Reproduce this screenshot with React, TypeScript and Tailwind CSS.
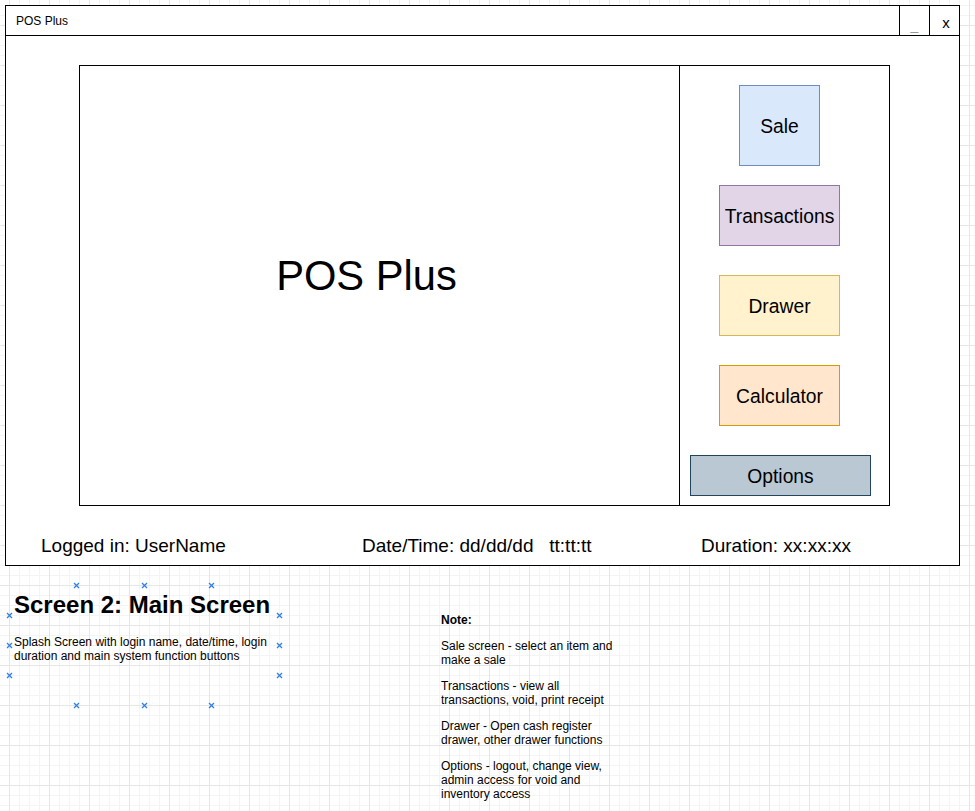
import React from "react";

const ACTIONS = [
    { label: "Sale", box: "w-[81px] h-[81px] bg-[#dae8fc] border-[#6c8ebf]", gap: "" },
    { label: "Transactions", box: "w-[121px] h-[61px] bg-[#e1d5e7] border-[#9673a6]", gap: "mt-[19px]" },
    { label: "Drawer", box: "w-[121px] h-[61px] bg-[#fff2cc] border-[#d6b656]", gap: "mt-[29px]" },
    { label: "Calculator", box: "w-[121px] h-[61px] bg-[#ffe6cc] border-[#d79b00]", gap: "mt-[29px]" },
    { label: "Options", box: "w-[181px] h-[41px] bg-[#bac8d3] border-[#23445d]", gap: "mt-[29px] ml-[2px]" },
];

const NOTES = [
    ["Sale screen - select an item and", "make a sale"],
    ["Transactions - view all", "transactions, void, print receipt"],
    ["Drawer - Open cash register", "drawer, other drawer functions"],
    ["Options - logout, change view,", "admin access for void and", "inventory access"],
];

// connection handles round the selected text box (x, y inside the 270x120 box)
const HANDLES = [
    [67.5, 0], [135, 0], [202.5, 0],
    [0, 30], [0, 60], [0, 90],
    [270, 30], [270, 60], [270, 90],
    [67.5, 120], [135, 120], [202.5, 120],
];

function Handle({ x, y }: { x: number; y: number }) {
    return (
        <svg
            width="7"
            height="7"
            viewBox="0 0 7 7"
            className="absolute"
            style={{ left: x - 3.5, top: y - 3.5 }}
        >
            <path d="M1 1L6 6M6 1L1 6" stroke="#2f80ed" strokeWidth="1.3" />
        </svg>
    );
}

function MainWindow() {
    return (
        <div className="w-[955px] h-[561px] border border-black bg-white flex flex-col">
            {/* Title bar */}
            <div className="h-[30px] border-b border-black flex items-stretch">
                <div className="flex-1 flex items-center pl-[10px] text-[12px]">POS Plus</div>
                <div className="w-[30px] border-l border-black flex items-end justify-center pb-[3px] text-[14px] leading-none text-[#999]">
                    _
                </div>
                <div className="w-[30px] border-l border-black flex items-center justify-center pt-[4px] pl-[3px] text-[15px] leading-none">
                    x
                </div>
            </div>

            {/* Body */}
            <div className="flex-1 pt-[29px] pl-[73px]">
                <div className="w-[811px] h-[441px] border border-black flex">
                    <div className="w-[600px] border-r border-black flex items-center justify-center pr-[26px] pb-[20px]">
                        <span className="text-[41.7px] leading-none">POS Plus</span>
                    </div>
                    <div className="flex-1 flex flex-col items-center pt-[19px] pr-[10px]">
                        {ACTIONS.map((a) => (
                            <div
                                key={a.label}
                                className={`${a.box} ${a.gap} border flex items-center justify-center pt-[2px] text-[19.3px] leading-none`}
                            >
                                {a.label}
                            </div>
                        ))}
                    </div>
                </div>

                {/* Status line */}
                <div className="mt-[30px] -ml-[38px] flex text-[19px] leading-[20px] whitespace-pre">
                    <span className="w-[321px]">Logged in: UserName</span>
                    <span className="w-[339px]">Date/Time: dd/dd/dd   tt:tt:tt</span>
                    <span>Duration: xx:xx:xx</span>
                </div>
            </div>
        </div>
    );
}

export default function App() {
    return (
        <div className="min-h-screen w-full pt-[5px] pl-[5px] text-black font-['Liberation_Sans',Arial,sans-serif] bg-white [background-image:linear-gradient(to_right,#e6e6e6_1px,transparent_1px),linear-gradient(to_bottom,#e6e6e6_1px,transparent_1px),linear-gradient(to_right,#f4f4f4_1px,transparent_1px),linear-gradient(to_bottom,#f4f4f4_1px,transparent_1px)] [background-size:40px_40px,40px_40px,10px_10px,10px_10px] [background-position:9px_25px,9px_25px,9px_5px,9px_5px]">
            <MainWindow />

            <div className="flex items-start">
                {/* Selected caption box */}
                <div className="relative ml-[4px] mt-[19px] w-[270px] h-[120px] pt-[6px] pl-[5px]">
                    <h2 className="text-[24px] leading-[28px] font-bold">Screen 2: Main Screen</h2>
                    <p className="mt-[16px] text-[12px] leading-[14px]">
                        Splash Screen with login name, date/time, login
                        <br />
                        duration and main system function buttons
                    </p>
                    {HANDLES.map(([x, y], i) => (
                        <Handle key={i} x={x} y={y} />
                    ))}
                </div>

                {/* Note */}
                <div className="ml-[162px] mt-[47px] text-[12px] leading-[14px] whitespace-nowrap">
                    <p className="font-bold">Note:</p>
                    {NOTES.map((lines) => (
                        <p key={lines[0]} className="mt-[12px]">
                            {lines.map((l) => (
                                <span key={l} className="block">
                                    {l}
                                </span>
                            ))}
                        </p>
                    ))}
                </div>
            </div>
        </div>
    );
}
